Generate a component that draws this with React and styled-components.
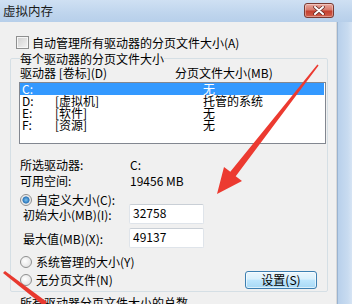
import React from 'react'
import styled, { createGlobalStyle } from 'styled-components'

const GlobalStyle = createGlobalStyle`
    html, body {
        margin: 0;
        padding: 0;
        background: #f0f0f0;
    }
    body {
        font-family: "Noto Sans CJK SC", "Noto Sans", sans-serif;
        font-size: 12px;
        color: #000;
    }
`

const Window = styled.div`
    position: relative;
    width: 352px;
    height: 304px;
    overflow: hidden;
    display: flex;
    flex-direction: column;
    background: #f0f0f0;
`

const TitleBar = styled.div`
    height: 22px;
    flex-shrink: 0;
    display: flex;
    align-items: flex-start;
    justify-content: space-between;
    padding: 0 18px 0 3px;
    box-sizing: border-box;
    background: linear-gradient(to bottom, #cfe0f3 0%, #bfd5ed 60%, #b7cfea 100%);
`

const Title = styled.span`
    font-size: 12.5px;
    line-height: 22px;
    color: #1a1a1a;
`

const CloseButton = styled.div`
    margin-top: 3px;
    width: 30px;
    height: 15px;
    box-sizing: border-box;
    border: 1px solid #7a3a32;
    border-radius: 3px;
    background: linear-gradient(to bottom, #e9a89e 0%, #d77a6c 45%, #c4402f 55%, #d0604d 100%);
    display: flex;
    align-items: center;
    justify-content: center;
    box-shadow: inset 0 0 0 1px rgba(255, 255, 255, 0.35);
`

const Main = styled.div`
    flex: 1;
    display: flex;
    min-height: 0;
`

const Content = styled.div`
    flex: 1;
    padding: 14px 0 0 10px;
    border-right: 1px solid #d9d9d9;
    display: flex;
    flex-direction: column;
`

const Frame = styled.div`
    width: 14px;
    flex-shrink: 0;
    border-left: 1px solid #9ab3d0;
    background: linear-gradient(to right, #b8d0eb, #c8dbf0 70%, #d6e4f4);
`

const CheckRow = styled.label`
    display: flex;
    align-items: center;
    gap: 3px;
    height: 13px;
    margin: 0 0 3px 6px;
    line-height: 13px;
`

const CheckBox = styled.span`
    width: 13px;
    height: 13px;
    box-sizing: border-box;
    border: 1px solid #8e8f8f;
    background: linear-gradient(135deg, #cfcfcf, #f4f4f4);
    box-shadow: inset 0 0 0 1px #f6f6f6;
`

const Group = styled.fieldset`
    margin: 0;
    width: 318px;
    box-sizing: border-box;
    padding: 0 1px 2px 9px;
    border: 1px solid #d5dfe5;
    border-radius: 2px;
    min-inline-size: 0;
`

const Legend = styled.legend`
    padding: 0;
    line-height: 13px;
    height: 13px;
`

const HeaderRow = styled.div`
    display: grid;
    grid-template-columns: 155px 1fr;
    height: 14px;
    line-height: 14px;
    margin-top: 1px;
    margin-bottom: 2px;
`

const ListBox = styled.div`
    margin-left: -1px;
    height: 62px;
    box-sizing: border-box;
    border: 1px solid #828790;
    background: #fff;
    padding: 0 1px 0 0;
`

const ListRow = styled.div`
    display: grid;
    grid-template-columns: 33px 148px 1fr;
    height: 12px;
    line-height: 12px;
    padding-left: 2px;
    background: ${({ selected }) => (selected ? '#3399ff' : 'transparent')};
    color: ${({ selected }) => (selected ? '#fff' : '#000')};
`

const InfoGrid = styled.div`
    display: grid;
    grid-template-columns: 110px 1fr;
    line-height: 16px;
    margin-top: 13px;
`

const RadioRow = styled.label`
    display: flex;
    align-items: center;
    gap: 4px;
    height: ${({ h }) => h}px;
    line-height: ${({ h }) => h}px;
    margin-top: ${({ top }) => top}px;
`

const Radio = styled.span`
    width: 12px;
    height: 12px;
    box-sizing: border-box;
    border-radius: 50%;
    border: 1px solid #8e8f8f;
    background: ${({ checked }) =>
        checked
            ? 'radial-gradient(circle, #7cc3f0 0%, #2a74b8 45%, #e8e8e8 55%, #fafafa 100%)'
            : 'radial-gradient(circle at 40% 40%, #ffffff 0%, #e6e6e6 70%, #d0d0d0 100%)'};
    flex-shrink: 0;
`

const SizeRows = styled.div`
    display: flex;
    flex-direction: column;
    gap: 4px;
    margin-top: -1px;
    margin-left: 3px;
`

const SizeRow = styled.div`
    display: grid;
    grid-template-columns: 106px 75px;
    align-items: center;
    height: 20px;
`

const TextBox = styled.div`
    height: 20px;
    box-sizing: border-box;
    border: 1px solid #dfe4ea;
    border-top-color: #c9cfd6;
    border-radius: 2px;
    background: #fff;
    padding: 0 0 0 3px;
    line-height: 16px;
`

const BottomRow = styled.div`
    display: flex;
    align-items: center;
    justify-content: space-between;
    margin-top: 2px;
    height: 18px;
`

const Button = styled.div`
    width: 72px;
    height: 18px;
    margin-right: 9px;
    box-sizing: border-box;
    border: 1px solid #3c7fb1;
    border-radius: 3px;
    background: linear-gradient(to bottom, #eaf6fd 0%, #d9f0fc 45%, #bee6fd 50%, #a7d9f5 100%);
    box-shadow: inset 0 0 0 1px rgba(255, 255, 255, 0.6);
    display: flex;
    align-items: center;
    justify-content: center;
    line-height: 16px;
`

const Footer = styled.div`
    margin: 4px 0 0 10px;
    line-height: 14px;
    white-space: nowrap;
`

const Overlay = styled.svg`
    position: absolute;
    left: 0;
    top: 0;
    pointer-events: none;
`

const drives = [
    { id: 'C:', label: '', size: '无', selected: true },
    { id: 'D:', label: '[虚拟机]', size: '托管的系统' },
    { id: 'E:', label: '[软件]', size: '无' },
    { id: 'F:', label: '[资源]', size: '无' },
]

export default function App() {
    return (
        <Window>
            <GlobalStyle />
            <TitleBar>
                <Title>虚拟内存</Title>
                <CloseButton>
                    <svg width="12" height="9" viewBox="0 0 12 9">
                        <path d="M2 1 L10 8 M10 1 L2 8" stroke="#5a2420" strokeWidth="3.4" strokeLinecap="round" />
                        <path d="M2 1 L10 8 M10 1 L2 8" stroke="#fff" strokeWidth="2" strokeLinecap="round" />
                    </svg>
                </CloseButton>
            </TitleBar>
            <Main>
                <Content>
                    <CheckRow>
                        <CheckBox />
                        <span>自动管理所有驱动器的分页文件大小(A)</span>
                    </CheckRow>
                    <Group>
                        <Legend>每个驱动器的分页文件大小</Legend>
                        <HeaderRow>
                            <span>驱动器 [卷标](D)</span>
                            <span>分页文件大小(MB)</span>
                        </HeaderRow>
                        <ListBox>
                            {drives.map((d) => (
                                <ListRow key={d.id} selected={d.selected}>
                                    <span>{d.id}</span>
                                    <span>{d.label}</span>
                                    <span>{d.size}</span>
                                </ListRow>
                            ))}
                        </ListBox>
                        <InfoGrid>
                            <span>所选驱动器:</span>
                            <span>C:</span>
                            <span>可用空间:</span>
                            <span>19456 MB</span>
                        </InfoGrid>
                        <RadioRow h={11} top={5}>
                            <Radio checked />
                            <span>自定义大小(C):</span>
                        </RadioRow>
                        <SizeRows>
                            <SizeRow>
                                <span>初始大小(MB)(I):</span>
                                <TextBox>32758</TextBox>
                            </SizeRow>
                            <SizeRow>
                                <span>最大值(MB)(X):</span>
                                <TextBox>49137</TextBox>
                            </SizeRow>
                        </SizeRows>
                        <RadioRow h={14} top={7}>
                            <Radio />
                            <span>系统管理的大小(Y)</span>
                        </RadioRow>
                        <BottomRow>
                            <RadioRow h={14} top={0}>
                                <Radio />
                                <span>无分页文件(N)</span>
                            </RadioRow>
                            <Button>设置(S)</Button>
                        </BottomRow>
                    </Group>
                    <Footer>所有驱动器分页文件大小的总数</Footer>
                </Content>
                <Frame />
            </Main>
            <Overlay width="352" height="304" viewBox="0 0 352 304">
                <polygon
                    points="217,194 224,167 230.3,171.8 317.4,64.5 318.6,65.5 235.7,176.2 242,181"
                    fill="#ec3a30"
                />
                <polygon points="3,273 5,271 47,302 44,306" fill="#e8392f" />
            </Overlay>
        </Window>
    )
}
